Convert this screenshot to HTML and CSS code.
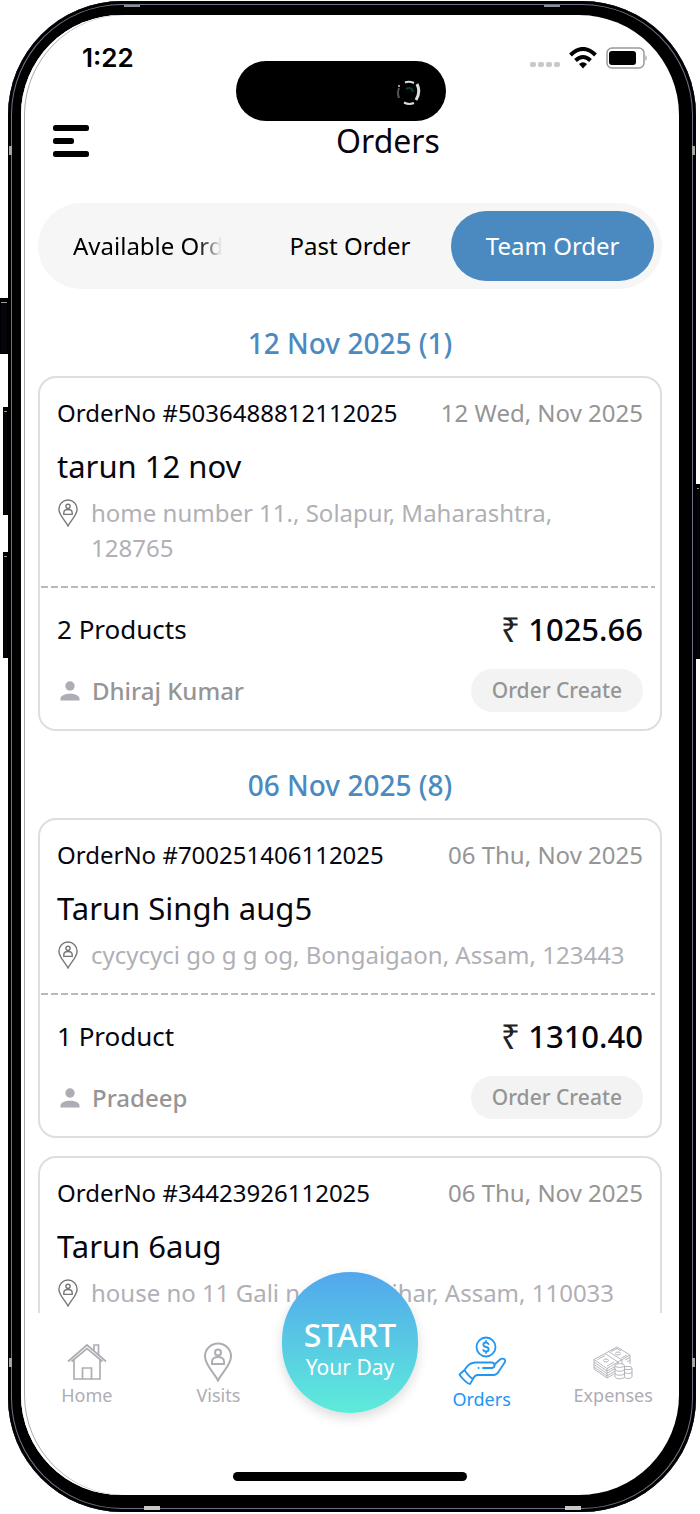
FILE: index.html
```html
<!DOCTYPE html>
<html lang="en">
<head>
<meta charset="utf-8">
<meta name="viewport" content="width=device-width, initial-scale=1">
<title>Orders</title>
<link rel="stylesheet" href="styles.css">
</head>
<body>
<svg class="sprite" aria-hidden="true">
  <symbol id="pin" viewBox="0 0 28 40">
    <path d="M14 38.500C11 32 1 23 1 14.500a13 13 0 0 1 26 0C27 23 17 32 14 38.500z"/>
    <circle cx="14" cy="10.500" r="3"/>
    <path d="M8 22v-2.500c0-6 12-6 12 0V22z"/>
  </symbol>
  <symbol id="person" viewBox="0 0 20 20">
    <circle cx="10" cy="5" r="4.700"/>
    <path d="M.5 19.500v-2c0-6.500 19-6.500 19 0v2z"/>
  </symbol>
</svg>
<div class="phone">
  <span class="key key-action"></span>
  <span class="key key-up"></span>
  <span class="key key-down"></span>
  <span class="key key-power"></span>
  <span class="band band-top-left"></span>
  <span class="band band-top-right"></span>
  <span class="band band-bottom-left"></span>
  <span class="band band-bottom-right"></span>
  <span class="band side left upper"></span>
  <span class="band side right upper"></span>
  <span class="band side left lower"></span>
  <span class="band side right lower"></span>
  <div class="island">
    <svg width="26" height="26" viewBox="0 0 26 26" fill="none">
      <path d="M9 2.500q4-1.500 9 .5M8 22.500q5 2.500 10 .5" stroke="#ddd" stroke-width="2"/>
      <path d="M21 4q4 8-1 16" stroke="#ddd" stroke-width="3"/>
      <path d="M3 8q-2 5 0 10" stroke="#555" stroke-width="2"/>
      <path d="M10 9q6-3 7 3" stroke="#0b3a3c" stroke-width="2"/>
      <circle cx="3" cy="6" r="1" fill="#ccc"/>
    </svg>
  </div>
  <div class="screen">
    <div class="status">
      <span class="clock">1:22</span>
      <svg class="signal" width="30" height="6" viewBox="0 0 30 6" fill="#c8c8c8"><rect width="6" height="5" rx="2"/><rect x="8" width="6" height="5" rx="2"/><rect x="16" width="6" height="5" rx="2"/><rect x="24" width="6" height="5" rx="2"/></svg>
      <svg width="28" height="22" viewBox="0 0 28 22" fill="none" stroke="#000" stroke-width="4"><path d="M1.500 8Q14-4 26.500 8"/><path d="M6.500 13.500Q14 6.500 21.500 13.500"/><path d="M10 17Q14 13.500 18 17L14 21.500z" fill="#000" stroke="none"/></svg>
      <svg width="42" height="22" viewBox="0 0 42 22"><rect x="1" y="1" width="37" height="20" rx="5" fill="none" stroke="#999" stroke-width="1.500"/><rect x="3" y="4" width="27" height="14" rx="3"/><path d="M39.500 8q2.500 3 0 6z" fill="#999"/></svg>
    </div>
    <header class="header">
      <button class="menu" type="button" aria-label="Menu">
        <svg width="36" height="32" viewBox="0 0 36 32"><rect width="36" height="6" rx="2.500"/><rect y="13" width="21" height="6" rx="2.500"/><rect y="26" width="36" height="6" rx="2.500"/></svg>
      </button>
      <h1>Orders</h1>
    </header>
    <div class="tabs" role="tablist">
      <button type="button" role="tab" aria-selected="false"><span class="faded">Available Orders</span></button>
      <button type="button" role="tab" aria-selected="false"><span>Past Order</span></button>
      <button type="button" role="tab" aria-selected="true" class="active"><span>Team Order</span></button>
    </div>
    <main class="list">
      <h2>12 Nov 2025 (1)</h2>
      <article class="card">
        <div class="row head"><span>OrderNo #5036488812112025</span><time>12 Wed, Nov 2025</time></div>
        <h3>tarun 12 nov</h3>
        <p class="address"><svg class="pin"><use href="#pin"/></svg><span>home number 11., Solapur, Maharashtra, 128765</span></p>
        <div class="divider"></div>
        <div class="row total"><span>2 Products</span><span class="price"><span class="rupee">₹</span>1025.66</span></div>
        <div class="row creator"><svg class="person"><use href="#person"/></svg><span class="who">Dhiraj Kumar</span><span class="badge">Order Create</span></div>
      </article>
      <h2>06 Nov 2025 (8)</h2>
      <article class="card">
        <div class="row head"><span>OrderNo #700251406112025</span><time>06 Thu, Nov 2025</time></div>
        <h3>Tarun Singh aug5</h3>
        <p class="address"><svg class="pin"><use href="#pin"/></svg><span>cycycyci go g g og, Bongaigaon, Assam, 123443</span></p>
        <div class="divider"></div>
        <div class="row total"><span>1 Product</span><span class="price"><span class="rupee">₹</span>1310.40</span></div>
        <div class="row creator"><svg class="person"><use href="#person"/></svg><span class="who">Pradeep</span><span class="badge">Order Create</span></div>
      </article>
      <article class="card">
        <div class="row head"><span>OrderNo #34423926112025</span><time>06 Thu, Nov 2025</time></div>
        <h3>Tarun 6aug</h3>
        <p class="address"><svg class="pin"><use href="#pin"/></svg><span>house no 11 Gali no 10 Katihar, Assam, 110033</span></p>
        <div class="divider"></div>
      </article>
    </main>
    <nav class="nav">
      <a href="#home">
        <svg width="40" height="40" viewBox="0 0 40 40" fill="none" stroke="currentColor" stroke-width="1.700"><path d="M1 19.500 20 3l19 16.500M4.500 19.500 20 6.500l15.500 13M7 18v19h26V18M15.500 37V26h9v11M27 8.500V3h4.500v10"/></svg>
        Home
      </a>
      <a href="#visits"><svg width="28" height="40" fill="none" stroke="currentColor" stroke-width="2"><use href="#pin"/></svg>Visits</a>
      <button class="start" type="button"><strong>START</strong><span>Your Day</span></button>
      <a href="#orders" class="current">
        <svg width="48" height="50" viewBox="0 0 48 50" fill="none" stroke="currentColor" stroke-width="1.800" stroke-linejoin="round" stroke-linecap="round">
          <circle cx="28" cy="11" r="9.500"/>
          <path d="M30.500 8q-1-1.500-2.500-1.500c-3.500 0-3.500 4 0 4.500s3.500 4.500 0 4.500q-2 0-2.800-1.500M28 5v1.500M28 15.500V17"/>
          <path d="M1.500 38.500 6.500 34c2.500 4 5 7 8.500 9l-3 5c-2 0-8-5-10.500-9.500zM6.500 34C10 29 12 27 17 26.500h17c3.500.5 3.500 5 0 5.500h-9M15 43c1-2.500 3-4 5-4h15c3 0 5-2 6-4l6-9c1-3-2.500-4.500-5-2.500l-6 5.500"/>
          <path d="M20.500 32h.1"/>
        </svg>
        Orders
      </a>
      <a href="#expenses">
        <svg width="40" height="40" viewBox="0 0 40 40" fill="none" stroke="currentColor" stroke-width=".9" stroke-linejoin="round">
          <path d="M1 17.500 24 5l13 8-23 13.500zM1 17.500V27l13 9M1 20l13 9 9-5M1 22.500l13 9 8-5M1 25l13 9 8-5M14 26.500V36l7-4M37 13v9M37 15.500 32 18M37 18l-3 2"/>
          <path d="M12 11.500l13 8.500v4.500l4-2V18L15.500 9.500M4.500 17.500 12 13.500M14 24l7-4M18 9.500l6-3 4 2.500M34 13l-5.500 3"/>
          <ellipse cx="13" cy="18.500" rx="2.500" ry="1.500"/><ellipse cx="25" cy="11.500" rx="2.500" ry="1.500"/>
          <g fill="#fff"><path d="M31 26v8.500c0 2.500 8 2.500 8 0V26"/><ellipse cx="35" cy="26" rx="4" ry="1.700"/><path d="M22 23.500V34.500c0 3 9.500 3 9.500 0v-11"/><ellipse cx="26.700" cy="23.500" rx="4.700" ry="1.900"/></g>
          <path d="M22 27c0 3 9.500 3 9.500 0M22 31c0 3 9.500 3 9.500 0M31.500 30c1 2 7.500 2 7.500 0"/>
        </svg>
        Expenses
      </a>
    </nav>
    <div class="home-bar"></div>
  </div>
</div>
</body>
</html>
```
FILE: styles.css
```css
* { box-sizing: border-box; }
body {
  margin: 0;
  background: #fff;
  color: #06060f;
  font-family: "Noto Sans", "Open Sans", sans-serif;
  font-size: 24px;
}
h1, h2, h3, p { margin: 0; font-weight: 400; }
button { border: 0; padding: 0; background: none; color: inherit; font: inherit; }
.sprite { position: absolute; width: 0; height: 0; }

/* Device shell */
.phone {
  position: relative;
  height: calc(100vh - 3px);
  margin: 1px 4px 2px 8px;
  padding: 14px 17px 17px 13px;
  border-radius: 114px;
  background: #000;
  box-shadow: inset 0 0 0 3px #000, inset 0 0 0 4px #6d7386;
}
.key { position: absolute; background: #05060c; border: 1px solid #000; box-shadow: inset 0 4px 0 -1px #000, inset 0 4px 0 #9a9aa4; }
.key-action { left: -8px; top: 297px; width: 8px; height: 56px; }
.key-up { left: -5px; top: 406px; width: 5px; height: 108px; }
.key-down { left: -5px; top: 551px; width: 5px; height: 106px; }
.key-power { right: -4px; top: 483px; width: 4px; height: 175px; }
.band { position: absolute; width: 16px; height: 2px; background: #8b9090; }
.band-top-left { left: 116px; top: 4px; }
.band-top-right { right: 136px; top: 4px; }
.band-bottom-left { left: 136px; bottom: 2px; height: 4px; background: #c4c8c6; }
.band-bottom-right { right: 115px; bottom: 2px; height: 4px; background: #c4c8c6; }
.band.side { width: 3px; height: 9px; background: #a2a8a6; }
.left { left: 1px; }
.right { right: 1px; }
.upper { top: 145px; }
.lower { bottom: 145px; }
.island {
  position: absolute;
  z-index: 2;
  left: 228px;
  top: 60px;
  display: flex;
  align-items: center;
  justify-content: flex-end;
  width: 210px;
  height: 60px;
  padding: 4px 24px 0 0;
  border-radius: 30px;
  background: #000;
}
.screen {
  display: flex;
  flex-direction: column;
  height: 100%;
  padding-bottom: 14px;
  overflow: hidden;
  border-radius: 100px;
  background: #fff;
  box-shadow: inset 3px 0 0 #fff, inset 4px 0 0 #a9a9b0;
}

/* Top of the screen */
.status { display: flex; align-items: center; gap: 9px; padding: 27px 31px 0 61px; }
.clock { flex: 1; font: 600 26px/32px Inter, sans-serif; color: #000; }
.signal { margin-top: 14px; }
.header { display: flex; align-items: center; margin-top: 45px; padding-left: 24px; }
.menu { display: flex; padding: 6px 8px; }
.header h1 { flex: 1; font-size: 32px; line-height: 44px; text-align: center; }
.tabs {
  display: grid;
  grid-template-columns: repeat(3, minmax(0, 1fr));
  margin: 40px 17px 0;
  padding: 8px;
  border-radius: 44px;
  background: #f6f6f6;
  color: #000;
}
.tabs button { padding: 18px 27px; border-radius: 36px; line-height: 34px; }
.tabs span { display: block; overflow: hidden; white-space: nowrap; }
.tabs .faded { -webkit-mask-image: linear-gradient(90deg, #000 84%, transparent); mask-image: linear-gradient(90deg, #000 84%, transparent); }
.tabs .active { background: #4a8ac0; color: #fff; }

/* Orders */
.list { flex: 1; min-height: 0; padding: 0 17px; overflow: hidden; }
.list h2 { padding: 33px 0 12px; color: #4a8ac0; font-size: 28px; font-weight: 500; line-height: 42px; text-align: center; }
.card { padding: 18px 17px 17px; border: 2px solid #dedede; border-radius: 18px; }
.card + .card { margin-top: 18px; }
.row { display: flex; align-items: center; justify-content: space-between; white-space: nowrap; }
.head { line-height: 34px; }
.head time { color: #959595; }
.card h3 { margin-top: 14px; font-size: 31px; line-height: 44px; }
.address { display: flex; gap: 12px; margin-top: 7px; padding-right: 8px; color: #b0b0b6; line-height: 35px; }
.pin { flex: none; width: 22px; height: 28px; margin-top: 4px; fill: none; stroke: #777; stroke-width: 2; }
.divider { height: 2px; margin: 21px -12px 19px -16px; background: repeating-linear-gradient(90deg, #b9b9b9 0 7px, transparent 7px 10px); }
.total { font-size: 26px; line-height: 44px; }
.price { display: flex; gap: 8px; font-size: 31px; font-weight: 500; }
.rupee { color: #222; font-size: 34px; font-weight: 400; }
.creator { margin-top: 18px; color: #959595; font-weight: 500; }
.person { width: 20px; height: 20px; margin-left: 3px; fill: #adadb5; }
.who { flex: 1; margin-left: 12px; }
.badge { padding: 0 21px; border-radius: 22px; background: #f3f3f3; font-size: 21px; line-height: 43px; }

/* Bottom navigation */
.nav { display: grid; grid-template-columns: repeat(5, minmax(0, 1fr)); align-items: start; justify-items: center; padding-top: 23px; }
.nav a { display: flex; flex-direction: column; align-items: center; padding-top: 6px; color: #adadb4; font-size: 18px; line-height: 26px; text-decoration: none; }
.nav .current { padding-top: 0; color: #2196f3; }
.start {
  position: relative;
  display: flex;
  flex-direction: column;
  align-items: center;
  justify-content: center;
  width: 136px;
  height: 141px;
  margin-top: -64px;
  padding-top: 12px;
  border-radius: 70px;
  background: linear-gradient(#52a6ed, #5eecda);
  box-shadow: 0 5px 12px rgba(0, 0, 0, .14);
  color: #fff;
}
.start strong { font-size: 32px; font-weight: 500; line-height: 36px; }
.start span { font-size: 21px; line-height: 28px; }
.home-bar { flex: none; width: 234px; height: 9px; margin: 59px auto 0; border-radius: 5px; background: #000; }
```
